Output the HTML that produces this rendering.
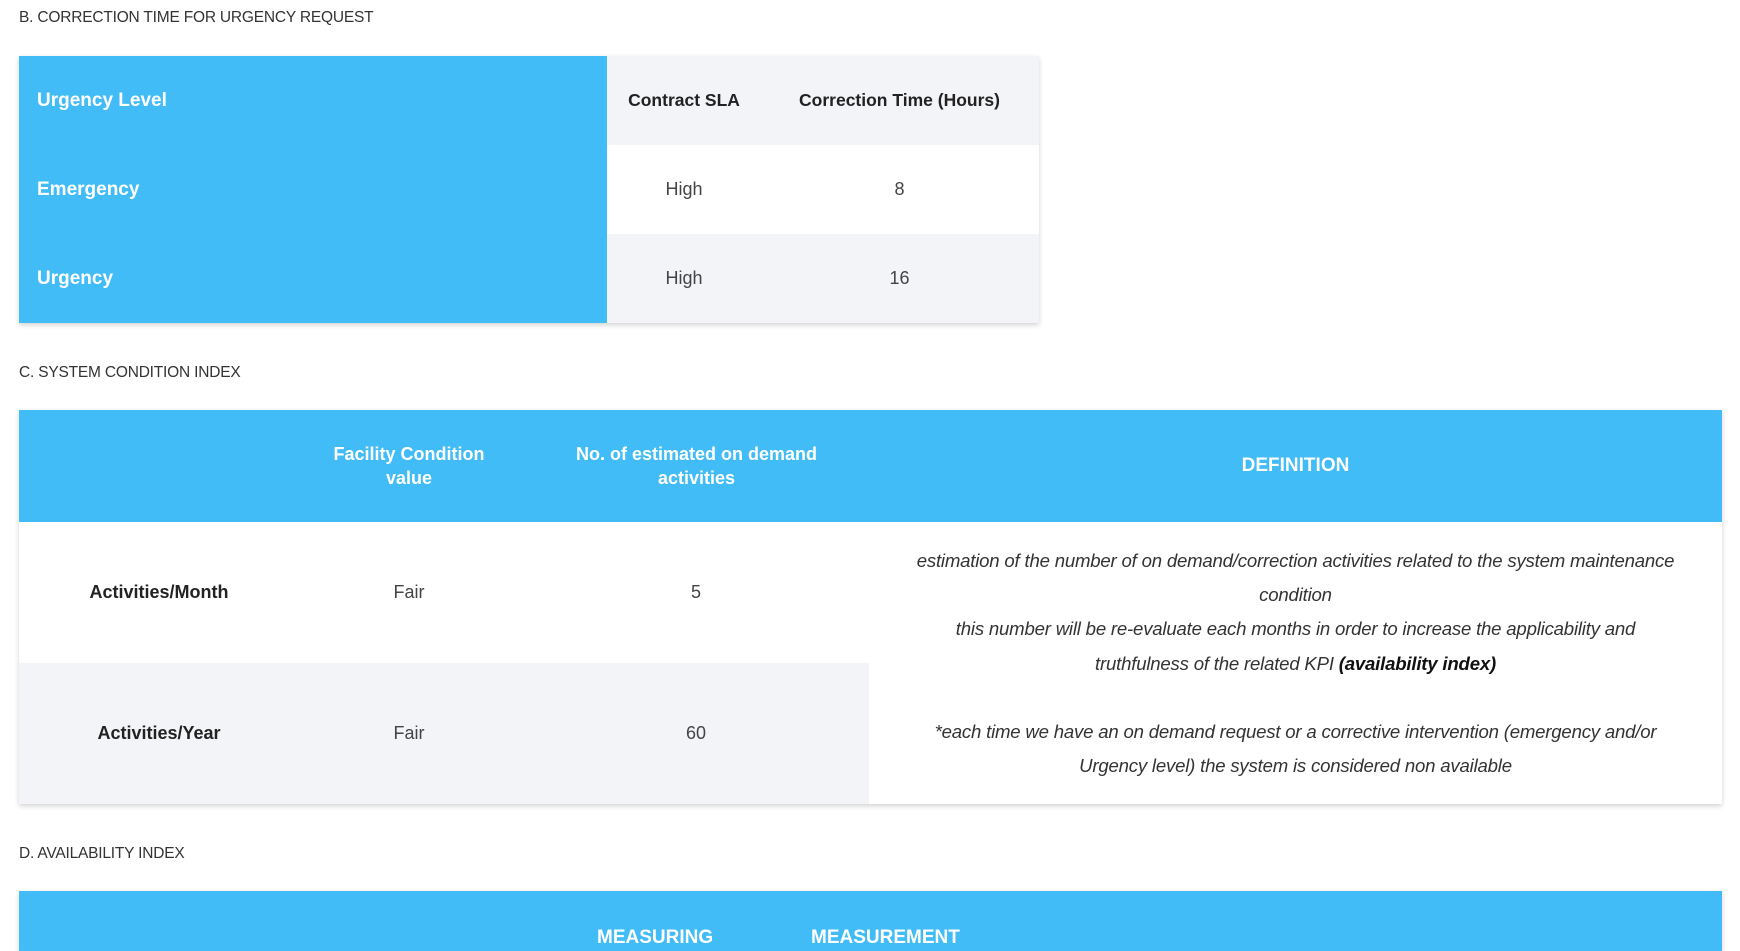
<!DOCTYPE html>
<html><head><meta charset="utf-8"><style>
*{margin:0;padding:0;box-sizing:border-box}
body{width:1740px;height:934px;overflow:hidden;background:#fff;font-family:"Liberation Sans",sans-serif;color:#222;position:relative}
.h{position:absolute;left:19px;font-size:15.5px;color:#333;letter-spacing:-0.2px}
.box{position:absolute;box-shadow:0 2px 5px rgba(0,0,0,0.18)}
.c{position:absolute;display:flex;align-items:center;justify-content:center;text-align:center;font-size:18px}
.blue{background:#41bcf7;color:#fff;font-weight:bold}
.g{background:#f3f4f8}
.w{background:#fff}
</style></head><body>
<div class="h" style="top:9px">B. CORRECTION TIME FOR URGENCY REQUEST</div>
<div class="box" style="left:19px;top:56px;width:1020px;height:267px">
 <div class="c blue" style="left:0;top:0;width:588px;height:267px"></div>
 <div class="c" style="left:18px;top:0;height:89px;color:#fff;font-weight:bold;font-size:19px">Urgency Level</div>
 <div class="c" style="left:18px;top:89px;height:89px;color:#fff;font-weight:bold;font-size:19px">Emergency</div>
 <div class="c" style="left:18px;top:178px;height:89px;color:#fff;font-weight:bold;font-size:19px">Urgency</div>
 <div class="c g" style="left:588px;top:0;width:432px;height:89px"></div>
 <div class="c w" style="left:588px;top:89px;width:432px;height:89px"></div>
 <div class="c g" style="left:588px;top:178px;width:432px;height:89px"></div>
 <div class="c" style="left:605px;top:0;width:120px;height:89px;font-weight:bold;font-size:17.5px">Contract SLA</div>
 <div class="c" style="left:773px;top:0;width:215px;height:89px;font-weight:bold;font-size:17.5px">Correction Time (Hours)</div>
 <div class="c" style="left:605px;top:89px;width:120px;height:89px;color:#444">High</div>
 <div class="c" style="left:773px;top:89px;width:215px;height:89px;color:#444">8</div>
 <div class="c" style="left:605px;top:178px;width:120px;height:89px;color:#444">High</div>
 <div class="c" style="left:773px;top:178px;width:215px;height:89px;color:#444">16</div>
</div>
<div class="h" style="top:364px">C. SYSTEM CONDITION INDEX</div>
<div class="box" style="left:19px;top:410px;width:1703px;height:394px">
 <div class="c blue" style="left:0;top:0;width:1703px;height:112px"></div>
 <div class="c" style="left:300px;top:0;width:180px;height:112px;color:#fff;font-weight:bold;line-height:24px">Facility Condition<br>value</div>
 <div class="c" style="left:540px;top:0;width:275px;height:112px;color:#fff;font-weight:bold;line-height:24px">No. of estimated on demand<br>activities</div>
 <div class="c" style="left:850px;top:0;width:853px;height:112px;color:#fff;font-weight:bold;font-size:19px">DEFINITION</div>
 <div class="c w" style="left:0;top:112px;width:850px;height:141px"></div>
 <div class="c g" style="left:0;top:253px;width:850px;height:141px"></div>
 <div class="c" style="left:40px;top:112px;width:200px;height:141px;font-weight:bold">Activities/Month</div>
 <div class="c" style="left:340px;top:112px;width:100px;height:141px;color:#444">Fair</div>
 <div class="c" style="left:627px;top:112px;width:100px;height:141px;color:#444">5</div>
 <div class="c" style="left:40px;top:253px;width:200px;height:141px;font-weight:bold">Activities/Year</div>
 <div class="c" style="left:340px;top:253px;width:100px;height:141px;color:#444">Fair</div>
 <div class="c" style="left:627px;top:253px;width:100px;height:141px;color:#444">60</div>
 <div style="position:absolute;left:850px;top:134px;width:853px;text-align:center;font-style:italic;font-size:18.6px;line-height:34.2px;color:#333;white-space:nowrap;letter-spacing:-0.2px">estimation of the number of on demand/correction activities related to the system maintenance<br>condition<br>this number will be re-evaluate each months in order to increase the applicability and<br>truthfulness of the related KPI <b style="color:#111">(availability index)</b><br><br>*each time we have an on demand request or a corrective intervention (emergency and/or<br>Urgency level) the system is considered non available</div>
</div>
<div class="h" style="top:845px">D. AVAILABILITY INDEX</div>
<div class="box" style="left:19px;top:891px;width:1703px;height:60px;background:#41bcf7">
 <div style="position:absolute;left:578px;top:36px;color:#fff;font-weight:bold;font-size:19px">MEASURING</div>
 <div style="position:absolute;left:792px;top:36px;color:#fff;font-weight:bold;font-size:19px">MEASUREMENT</div>
</div>
</body></html>
